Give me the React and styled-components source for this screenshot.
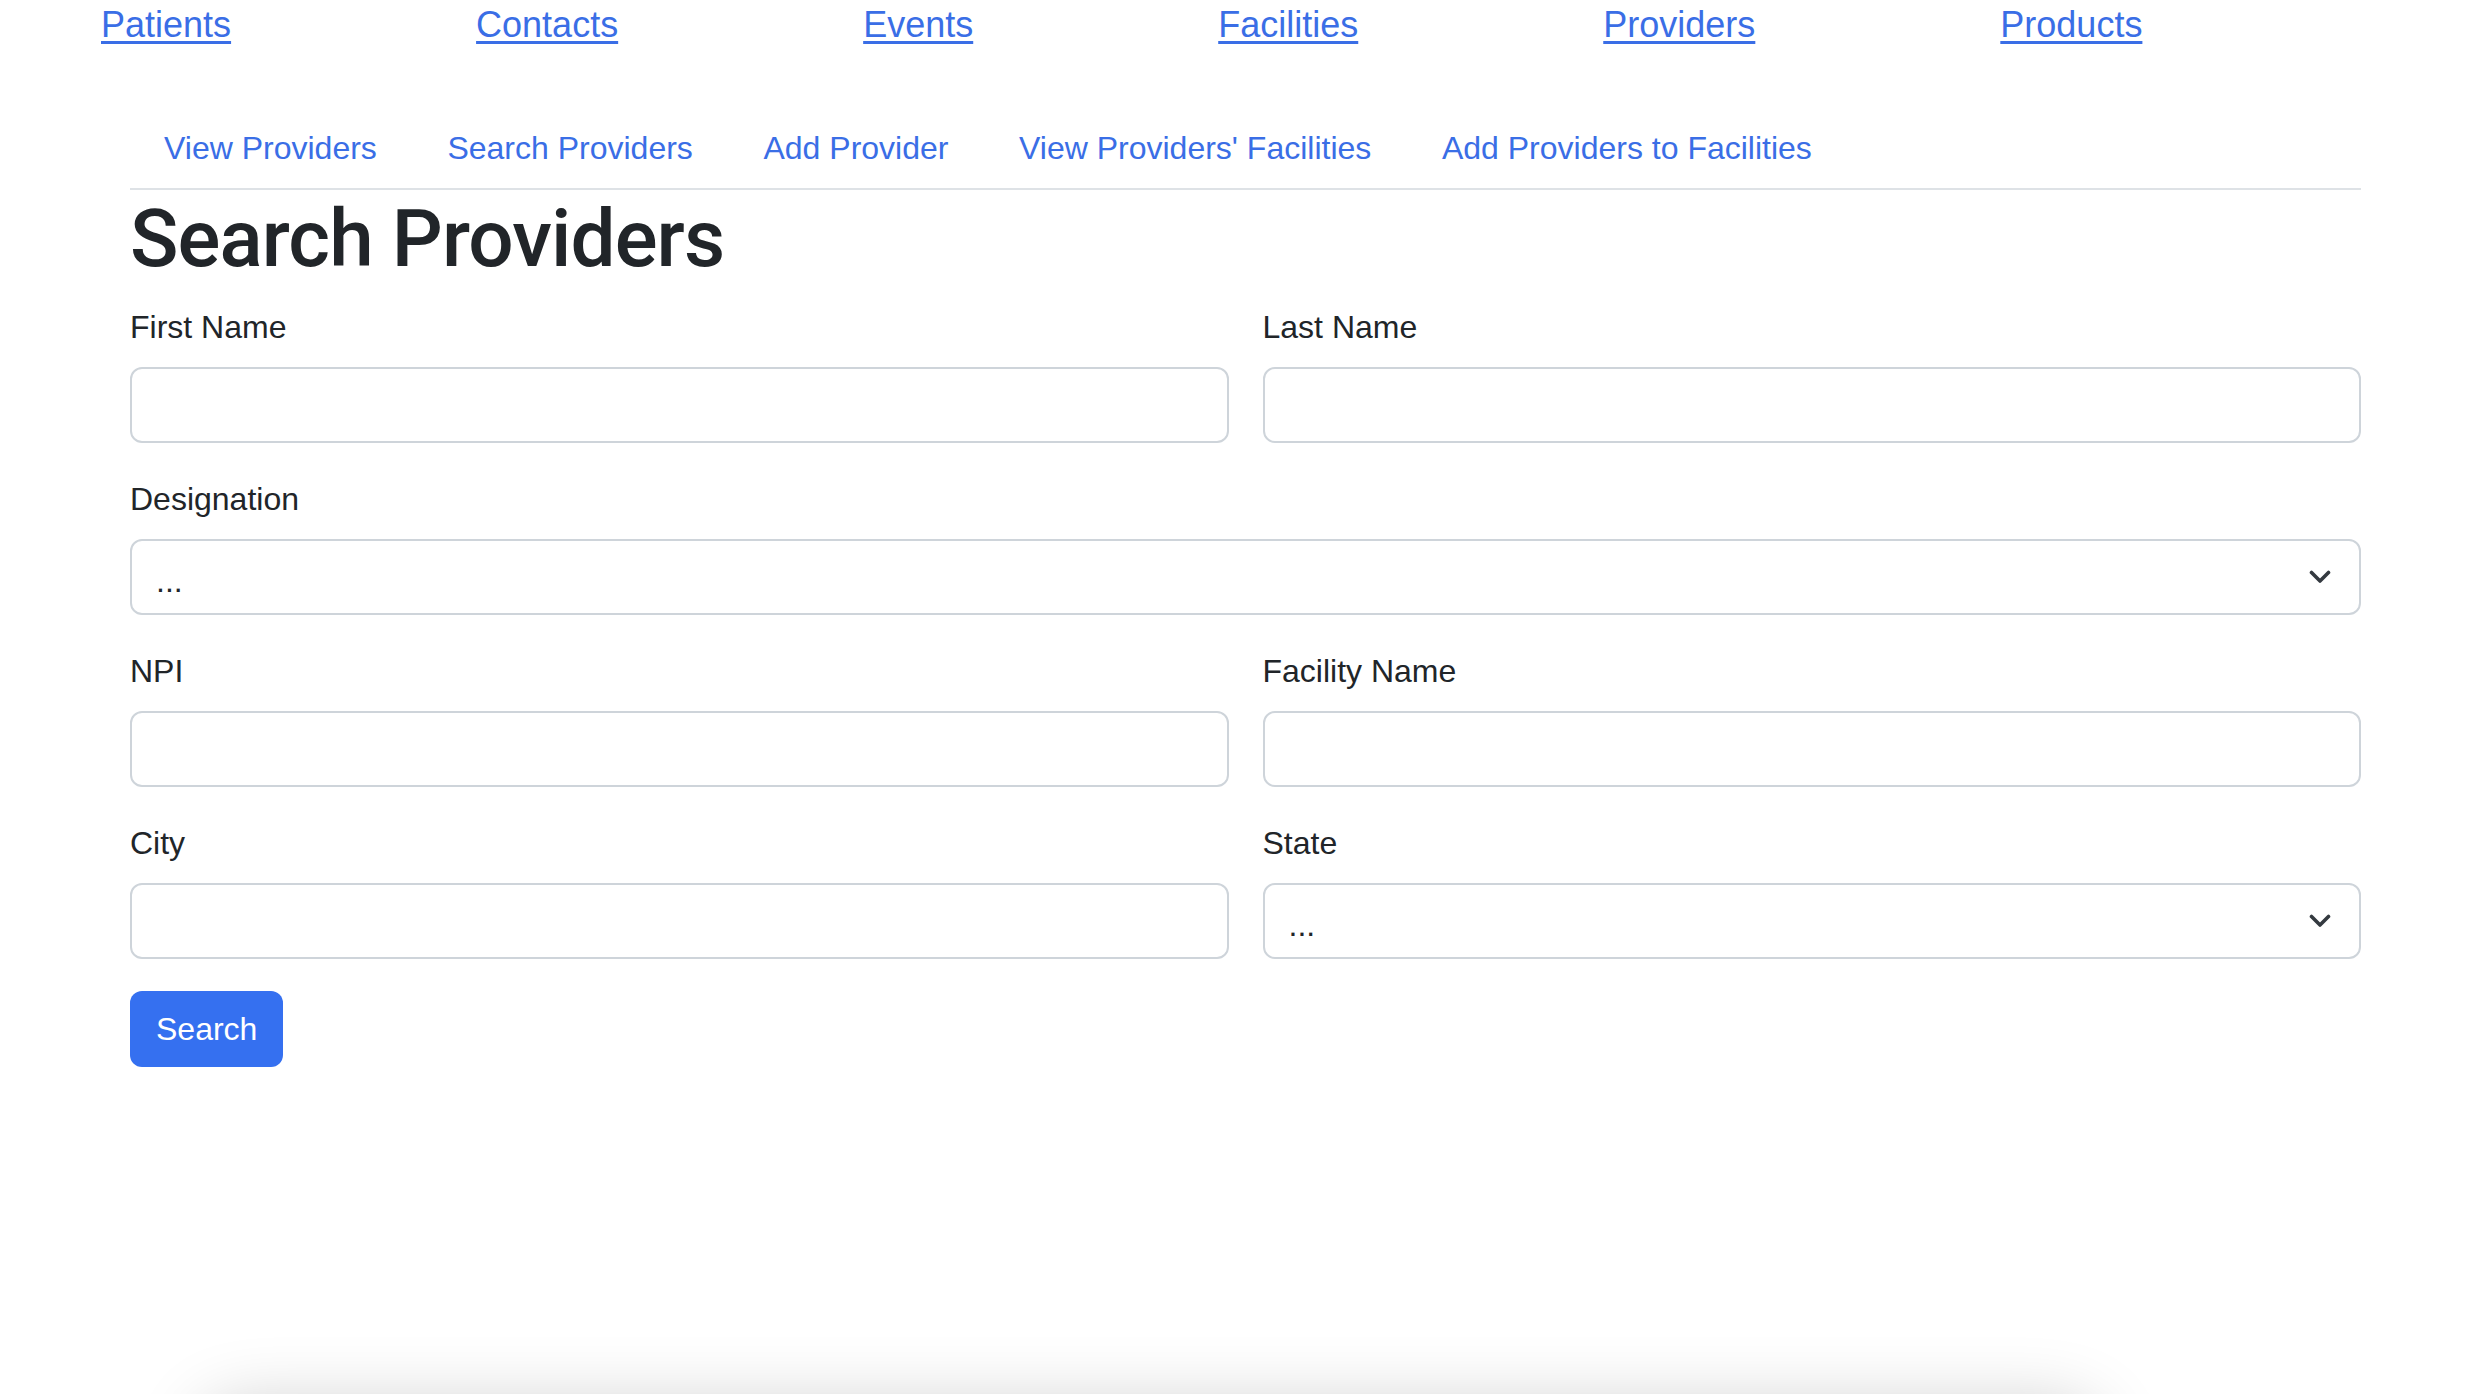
import React from "react";
import styled, { createGlobalStyle } from "styled-components";

const Global = createGlobalStyle`
  html, body { margin: 0; padding: 0; background: #ffffff; overflow: hidden; }
  body {
    font-family: "Liberation Sans", Arial, sans-serif;
    color: #212529;
  }
  * { box-sizing: border-box; }
`;

const Page = styled.div`
  width: 2476px;
  height: 1394px;
  overflow: hidden;
  padding-top: 3px;
`;

const TopNav = styled.nav`
  display: flex;
  gap: 245px;
  padding-left: 101px;
  font-size: 36px;
  line-height: 43px;
`;

const TopLink = styled.a`
  color: #3a6ee6;
  text-decoration: underline;
  text-decoration-thickness: 3px;
  text-underline-offset: 4px;
  cursor: pointer;
`;

const Container = styled.div`
  width: 2231px;
  margin-left: 130px;
`;

const Tabs = styled.ul`
  list-style: none;
  margin: 62px 0 0 0;
  padding: 0;
  display: flex;
  border-bottom: 2px solid #dee2e6;
`;

const Tab = styled.li`
  padding: 16px 35.3px 16px 35.3px;
  font-size: 32px;
  line-height: 48px;
  color: #3a6ee6;
  cursor: pointer;

  &:first-child {
    padding-left: 34px;
  }
`;

const Title = styled.h1`
  margin: 1px 0 16px 0;
  font-family: Roboto, "Liberation Sans", Arial, sans-serif;
  font-weight: 500;
  font-size: 80px;
  line-height: 96px;
  letter-spacing: -0.9px;
  color: #212529;
`;

const Row = styled.div`
  display: grid;
  grid-template-columns: ${(p) => (p.$cols === 2 ? "1fr 1fr" : "1fr")};
  column-gap: 34px;
  margin-bottom: 32px;
`;

const Field = styled.div`
  display: flex;
  flex-direction: column;
`;

const Label = styled.label`
  font-size: 32px;
  line-height: 48px;
  margin-bottom: 16px;
  color: #212529;
`;

const Input = styled.input`
  height: 76px;
  width: 100%;
  border: 2px solid #ced4da;
  border-radius: 12px;
  padding: 12px 24px;
  font-family: inherit;
  font-size: 32px;
  color: #212529;
  background: #fff;
  outline: none;
`;

const SelectWrap = styled.div`
  position: relative;
  width: 100%;
`;

const Select = styled.select`
  appearance: none;
  -webkit-appearance: none;
  height: 76px;
  width: 100%;
  border: 2px solid #ced4da;
  border-radius: 12px;
  padding: 8px 96px 0 24px;
  font-family: inherit;
  font-size: 32px;
  color: #212529;
  background: #fff;
  outline: none;
`;

const Chevron = styled.svg`
  position: absolute;
  right: 30px;
  top: 31px;
  width: 22px;
  height: 14px;
  pointer-events: none;
`;

const Button = styled.button`
  height: 76px;
  padding: 0 26px;
  border: none;
  border-radius: 12px;
  background: #3570f0;
  color: #ffffff;
  font-family: inherit;
  font-size: 32px;
  cursor: pointer;
`;

const ShadowCard = styled.div`
  margin: 338px 0 0 200px;
  width: 1900px;
  height: 300px;
  background: #ffffff;
  border-radius: 40px;
  box-shadow: 0 0 70px rgba(0, 0, 0, 0.2);
`;

function Caret() {
  return (
    <Chevron viewBox="0 0 22 14">
      <path
        d="M2.5 2.5 L11 11 L19.5 2.5"
        fill="none"
        stroke="#343a40"
        strokeWidth="3.6"
        strokeLinecap="round"
        strokeLinejoin="round"
      />
    </Chevron>
  );
}

function TextField({ label }) {
  return (
    <Field>
      <Label>{label}</Label>
      <Input type="text" />
    </Field>
  );
}

function SelectField({ label }) {
  return (
    <Field>
      <Label>{label}</Label>
      <SelectWrap>
        <Select defaultValue="">
          <option value="">...</option>
        </Select>
        <Caret />
      </SelectWrap>
    </Field>
  );
}

const topLinks = ["Patients", "Contacts", "Events", "Facilities", "Providers", "Products"];
const tabs = [
  "View Providers",
  "Search Providers",
  "Add Provider",
  "View Providers' Facilities",
  "Add Providers to Facilities",
];

export default function App() {
  return (
    <>
      <Global />
      <Page>
        <TopNav>
          {topLinks.map((l) => (
            <TopLink key={l}>{l}</TopLink>
          ))}
        </TopNav>
        <Container>
          <Tabs>
            {tabs.map((t) => (
              <Tab key={t}>{t}</Tab>
            ))}
          </Tabs>
          <Title>Search Providers</Title>
          <Row $cols={2}>
            <TextField label="First Name" />
            <TextField label="Last Name" />
          </Row>
          <Row>
            <SelectField label="Designation" />
          </Row>
          <Row $cols={2}>
            <TextField label="NPI" />
            <TextField label="Facility Name" />
          </Row>
          <Row $cols={2}>
            <TextField label="City" />
            <SelectField label="State" />
          </Row>
          <Button>Search</Button>
        </Container>
        <ShadowCard />
      </Page>
    </>
  );
}
